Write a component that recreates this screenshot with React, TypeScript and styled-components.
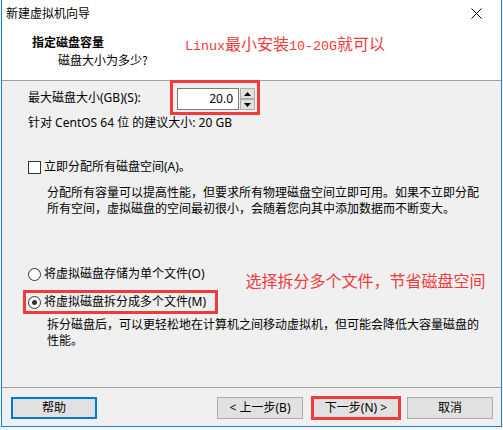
import React from "react";
import styled, { createGlobalStyle } from "styled-components";

const Global = createGlobalStyle`
  html, body { margin: 0; padding: 0; background: #f4f4f4; }
  body { font-family: "Noto Sans", "Noto Sans CJK SC", sans-serif; font-size: 12px; color: #000; overflow: hidden; }
  * { box-sizing: border-box; }
`;

const RED = "#ef3b3b";
const CJK = `"Noto Sans CJK SC", "Noto Sans", sans-serif`;
const UI = `"Noto Sans", "Noto Sans CJK SC", sans-serif`;

const Window = styled.div`
  width: 501px;
  height: 428px;
  margin: -1px 0 0 1px;
  border: 1px solid #1883d7;
  background: #f0f0f0;
  display: flex;
  flex-direction: column;
`;

const TitleBar = styled.div`
  height: 26px;
  background: #fff;
  display: flex;
  align-items: center;
  padding: 0 10px 0 4px;
  font-family: ${CJK};
  font-size: 12px;
  line-height: 16px;
`;

const TitleText = styled.div`
  flex: 1;
`;

const CloseIcon = styled.svg`
  width: 11px;
  height: 11px;
  margin-right: 9px;
  margin-top: 1px;
`;

const Header = styled.div`
  height: 55px;
  background: #fff;
  border-bottom: 1px solid #a0a0a0;
  display: flex;
  padding: 8px 0 0 30px;
`;

const HeaderText = styled.div`
  width: 153px;
  display: flex;
  flex-direction: column;
`;

const Heading = styled.div`
  font-family: ${CJK};
  font-weight: 700;
  font-size: 12px;
  line-height: 16px;
`;

const SubHeading = styled.div`
  font-family: ${CJK};
  font-size: 12px;
  line-height: 16px;
  margin: 2px 0 0 26px;
`;

const Annotation = styled.div<{ $top: number; $left?: number }>`
  color: ${RED};
  font-family: ${CJK};
  font-size: 16px;
  line-height: 20px;
  margin-top: ${(p) => p.$top}px;
  margin-left: ${(p) => p.$left ?? 0}px;
  white-space: nowrap;
`;

const Latin = styled.span`
  font-family: "Liberation Mono", monospace;
  font-size: 13.33px;
`;

const Content = styled.div`
  flex: 1;
  display: flex;
  flex-direction: column;
  padding-left: 26px;
`;

const SizeRow = styled.div`
  display: flex;
  align-items: center;
  margin-top: -1px;
`;

const Label = styled.div<{ $width?: number }>`
  width: ${(p) => (p.$width ? `${p.$width}px` : "auto")};
  font-family: ${UI};
  font-size: 12px;
  line-height: 16px;
  white-space: nowrap;
`;

const Highlight = styled.div<{ $pad: string }>`
  border: 3px solid ${RED};
  padding: ${(p) => p.$pad};
  display: flex;
  align-items: center;
`;

const SpinInput = styled.div`
  width: 62px;
  height: 22px;
  background: #fff;
  border: 1px solid #7a7a7a;
  text-align: right;
  padding-right: 5px;
  font-family: ${UI};
  font-size: 12px;
  line-height: 20px;
`;

const SpinButtons = styled.div`
  display: flex;
  flex-direction: column;
  margin-left: 1px;
`;

const SpinButton = styled.div`
  width: 15px;
  height: 11px;
  background: #e1e1e1;
  border: 1px solid #adadad;
  display: flex;
  align-items: center;
  justify-content: center;
`;

const Recommend = styled.div`
  font-family: ${UI};
  font-size: 12px;
  line-height: 16px;
`;

const OptionRow = styled.div<{ $top: number; $left?: number }>`
  display: flex;
  align-items: flex-start;
  margin-top: ${(p) => p.$top}px;
  margin-left: ${(p) => p.$left ?? 0}px;
`;

const Option = styled.div`
  display: flex;
  align-items: center;
  height: 16px;
  font-family: ${UI};
  font-size: 12px;
  line-height: 16px;
  white-space: nowrap;
`;

const CheckBox = styled.span`
  width: 13px;
  height: 13px;
  border: 1px solid #333;
  background: #fff;
  margin-right: 3px;
  flex: none;
`;

const Radio = styled.span<{ $checked?: boolean }>`
  width: 13px;
  height: 13px;
  border: 1px solid #333;
  border-radius: 50%;
  background: #fff;
  margin-right: 3px;
  flex: none;
  display: flex;
  align-items: center;
  justify-content: center;
  &::after {
    content: "";
    width: 5px;
    height: 5px;
    border-radius: 50%;
    background: ${(p) => (p.$checked ? "#333" : "transparent")};
  }
`;

const Paragraph = styled.div<{ $top: number }>`
  margin: ${(p) => p.$top}px 0 0 19px;
  font-family: ${CJK};
  font-size: 12px;
  line-height: 16px;
  white-space: nowrap;
`;

const Footer = styled.div`
  height: 39px;
  border-top: 1px solid #a0a0a0;
  display: flex;
  align-items: flex-start;
  padding: 9px 8px 0 9px;
`;

const Button = styled.div<{ $focus?: boolean }>`
  width: 86px;
  height: 22px;
  background: #e1e1e1;
  border: ${(p) => (p.$focus ? "2px solid #0078d7" : "1px solid #adadad")};
  display: flex;
  align-items: center;
  justify-content: center;
  font-family: ${UI};
  font-size: 12px;
  line-height: 16px;
  white-space: nowrap;
`;

const Spacer = styled.div`
  flex: 1;
`;

const NextHighlight = styled.div`
  border: 3px solid ${RED};
  margin: -1px 6px 0 8px;
  width: 90px;
  height: 24px;
  background: #e1e1e1;
  display: flex;
  align-items: center;
  justify-content: center;
  font-family: ${UI};
  font-size: 12px;
  line-height: 16px;
  white-space: nowrap;
`;

export default function App() {
  return (
    <>
      <Global />
      <Window>
        <TitleBar>
          <TitleText>新建虚拟机向导</TitleText>
          <CloseIcon viewBox="0 0 11 11">
            <path d="M0.5 0.5 L10.5 10.5 M10.5 0.5 L0.5 10.5" stroke="#000" strokeWidth="1" fill="none" />
          </CloseIcon>
        </TitleBar>
        <Header>
          <HeaderText>
            <Heading>指定磁盘容量</Heading>
            <SubHeading>磁盘大小为多少?</SubHeading>
          </HeaderText>
          <Annotation $top={-1}>
            <Latin>Linux</Latin>最小安装<Latin>10-20G</Latin>就可以
          </Annotation>
        </Header>
        <Content>
          <SizeRow>
            <Label $width={142}>最大磁盘大小(GB)(S):</Label>
            <Highlight $pad="5px 2px 2px 4px">
              <SpinInput>20.0</SpinInput>
              <SpinButtons>
                <SpinButton>
                  <svg width="7" height="4" viewBox="0 0 7 4">
                    <path d="M0 4 L3.5 0 L7 4 Z" fill="#000" />
                  </svg>
                </SpinButton>
                <SpinButton>
                  <svg width="7" height="4" viewBox="0 0 7 4">
                    <path d="M0 0 L3.5 4 L7 0 Z" fill="#000" />
                  </svg>
                </SpinButton>
              </SpinButtons>
            </Highlight>
          </SizeRow>
          <Recommend>针对 CentOS 64 位 的建议大小: 20 GB</Recommend>
          <OptionRow $top={28}>
            <Option>
              <CheckBox />
              立即分配所有磁盘空间(A)。
            </Option>
          </OptionRow>
          <Paragraph $top={9}>
            分配所有容量可以提高性能，但要求所有物理磁盘空间立即可用。如果不立即分配
            <br />
            所有空间，虚拟磁盘的空间最初很小，会随着您向其中添加数据而不断变大。
          </Paragraph>
          <OptionRow $top={50}>
            <Option>
              <Radio />
              将虚拟磁盘存储为单个文件(O)
            </Option>
            <Annotation $top={4} $left={41}>
              选择拆分多个文件，节省磁盘空间
            </Annotation>
          </OptionRow>
          <OptionRow $top={0} $left={-5}>
            <Highlight $pad="1px 9px 1px 2px">
              <Option>
                <Radio $checked />
                将虚拟磁盘拆分成多个文件(M)
              </Option>
            </Highlight>
          </OptionRow>
          <Paragraph $top={2}>
            拆分磁盘后，可以更轻松地在计算机之间移动虚拟机，但可能会降低大容量磁盘的
            <br />
            性能。
          </Paragraph>
        </Content>
        <Footer>
          <Button $focus>帮助</Button>
          <Spacer />
          <Button>&lt; 上一步(B)</Button>
          <NextHighlight>下一步(N) &gt;</NextHighlight>
          <Button>取消</Button>
        </Footer>
      </Window>
    </>
  );
}
